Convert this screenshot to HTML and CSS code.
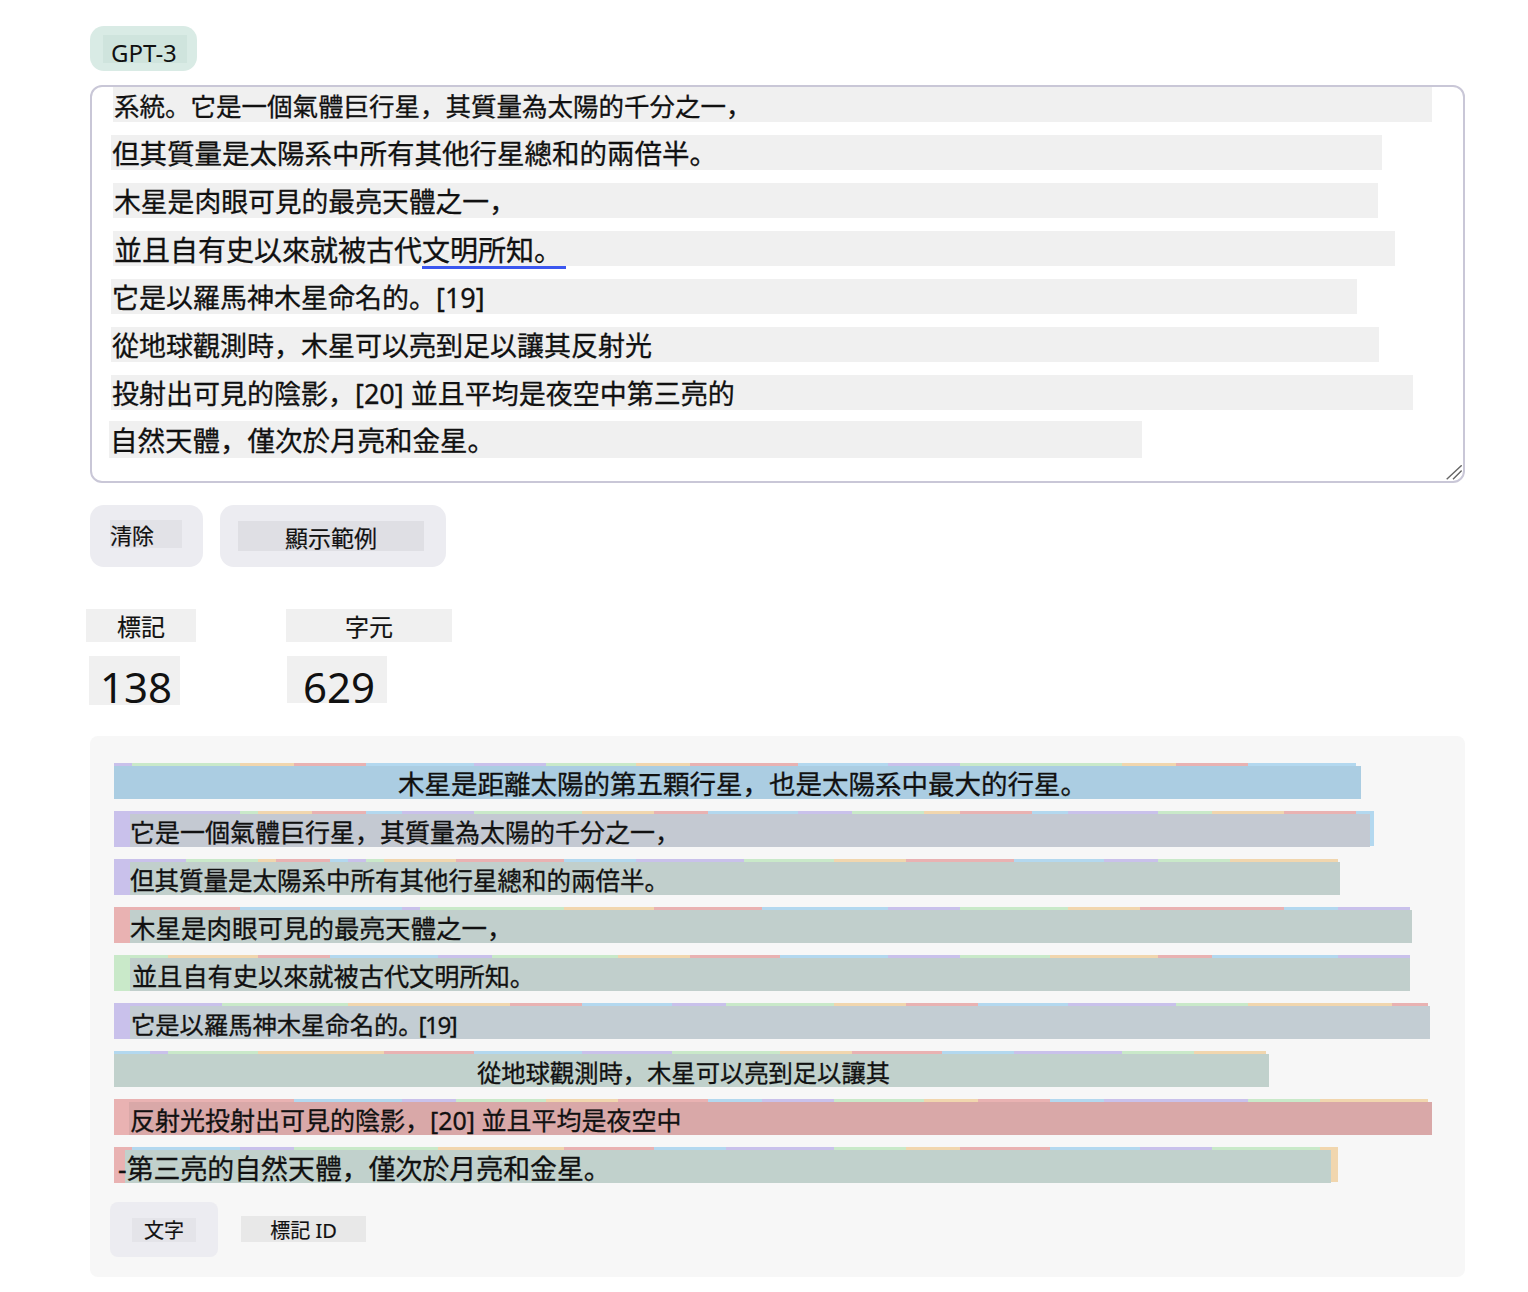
FILE: index.html
```html
<!DOCTYPE html>
<html>
<head>
<meta charset="utf-8">
<title>Tokenizer</title>
<link rel="stylesheet" href="styles.css">
</head>
<body>
<div class="page">
  <div class="tab"><span class="tab-label">GPT-3</span></div>

  <div class="editor">
    <div class="eline fs255" style="margin-left:21px;width:1319px">系統。它是一個氣體巨行星，其質量為太陽的千分之一，</div>
    <div class="eline fs275" style="margin-left:19px;width:1271px">但其質量是太陽系中所有其他行星總和的兩倍半。</div>
    <div class="eline fs268" style="margin-left:21px;width:1265px">木星是肉眼可見的最亮天體之一，</div>
    <div class="eline fs28" style="margin-left:21px;width:1282px">並且自有史以來就被古代文明所知。<span class="spell"></span></div>
    <div class="eline fs27" style="margin-left:19px;width:1246px">它是以羅馬神木星命名的。[19]</div>
    <div class="eline fs27" style="margin-left:19px;width:1268px">從地球觀測時，木星可以亮到足以讓其反射光</div>
    <div class="eline fs27" style="margin-left:19px;width:1302px">投射出可見的陰影，[20] 並且平均是夜空中第三亮的</div>
    <div class="eline eline-last fs275" style="margin-left:17px;width:1033px">自然天體，僅次於月亮和金星。</div>
    <svg class="grip" width="16" height="15" viewBox="0 0 16 15"><path d="M0.7 14.3L15.7 0.3M7 14.3L15.7 5.6" stroke="#666" stroke-width="1.4" fill="none"/></svg>
  </div>

  <div class="actions">
    <button class="btn btn-clear"><span class="btn-in">清除</span></button>
    <button class="btn btn-example"><span class="btn-in">顯示範例</span></button>
  </div>

  <div class="stats">
    <div class="stat stat1">
      <div class="stat-label">標記</div>
      <div class="stat-value">138</div>
    </div>
    <div class="stat stat2">
      <div class="stat-label">字元</div>
      <div class="stat-value">629</div>
    </div>
  </div>

  <div class="tokens">
    <div class="tline">
      <div class="strip" style="width:1242px"><i class="p" style="flex:1"></i><i class="g" style="flex:6"></i><i class="o" style="flex:3"></i><i class="r" style="flex:4"></i><i class="b" style="flex:6"></i><i class="p" style="flex:4"></i><i class="g" style="flex:5"></i><i class="o" style="flex:3"></i><i class="r" style="flex:6"></i><i class="b" style="flex:5"></i><i class="p" style="flex:4"></i><i class="g" style="flex:9"></i><i class="o" style="flex:3"></i><i class="r" style="flex:4"></i><i class="b" style="flex:6"></i></div>
      <div class="trow"><div class="tmain m-blue fs265 center nudge" style="width:1247px">木星是距離太陽的第五顆行星，也是太陽系中最大的行星。</div></div>
    </div>
    <div class="tline">
      <div class="strip" style="width:1260px"><i class="p" style="flex:7"></i><i class="g" style="flex:1"></i><i class="o" style="flex:3"></i><i class="r" style="flex:3"></i><i class="b" style="flex:2"></i><i class="p" style="flex:4"></i><i class="g" style="flex:6"></i><i class="o" style="flex:4"></i><i class="r" style="flex:3"></i><i class="b" style="flex:5"></i><i class="p" style="flex:3"></i><i class="g" style="flex:4"></i><i class="o" style="flex:2"></i><i class="r" style="flex:4"></i><i class="b" style="flex:2"></i><i class="p" style="flex:5"></i><i class="g" style="flex:3"></i><i class="o" style="flex:4"></i><i class="r" style="flex:4"></i><i class="b" style="flex:1"></i></div>
      <div class="trow"><span class="chip p"></span><div class="tmain m-slate fs25" style="width:1240px">它是一個氣體巨行星，其質量為太陽的千分之一，</div><span class="rchip b" style="width:4px"></span></div>
    </div>
    <div class="tline">
      <div class="strip" style="width:1224px"><i class="p" style="flex:4"></i><i class="g" style="flex:4"></i><i class="o" style="flex:1"></i><i class="r" style="flex:3"></i><i class="b" style="flex:1"></i><i class="p" style="flex:1"></i><i class="g" style="flex:1"></i><i class="o" style="flex:4"></i><i class="r" style="flex:6"></i><i class="b" style="flex:4"></i><i class="p" style="flex:6"></i><i class="g" style="flex:5"></i><i class="o" style="flex:4"></i><i class="r" style="flex:6"></i><i class="b" style="flex:5"></i><i class="p" style="flex:3"></i><i class="g" style="flex:4"></i><i class="o" style="flex:6"></i></div>
      <div class="trow"><span class="chip p"></span><div class="tmain m-sage fs245" style="width:1210px">但其質量是太陽系中所有其他行星總和的兩倍半。</div></div>
    </div>
    <div class="tline">
      <div class="strip" style="width:1296px"><i class="r" style="flex:7"></i><i class="b" style="flex:9"></i><i class="p" style="flex:1"></i><i class="g" style="flex:8"></i><i class="o" style="flex:5"></i><i class="r" style="flex:6"></i><i class="b" style="flex:7"></i><i class="p" style="flex:4"></i><i class="g" style="flex:6"></i><i class="o" style="flex:4"></i><i class="r" style="flex:8"></i><i class="b" style="flex:3"></i><i class="p" style="flex:4"></i></div>
      <div class="trow"><span class="chip r"></span><div class="tmain m-sage fs255" style="width:1282px">木星是肉眼可見的最亮天體之一，</div></div>
    </div>
    <div class="tline">
      <div class="strip" style="width:1296px"><i class="g" style="flex:3"></i><i class="o" style="flex:5"></i><i class="r" style="flex:4"></i><i class="b" style="flex:6"></i><i class="p" style="flex:3"></i><i class="g" style="flex:7"></i><i class="o" style="flex:4"></i><i class="r" style="flex:5"></i><i class="b" style="flex:6"></i><i class="p" style="flex:4"></i><i class="g" style="flex:5"></i><i class="o" style="flex:6"></i><i class="r" style="flex:3"></i><i class="b" style="flex:7"></i><i class="p" style="flex:4"></i></div>
      <div class="trow"><span class="chip g"></span><div class="tmain m-sage fs252 pad2" style="width:1280px">並且自有史以來就被古代文明所知。</div></div>
    </div>
    <div class="tline">
      <div class="strip" style="width:1314px"><i class="p" style="flex:6"></i><i class="g" style="flex:7"></i><i class="o" style="flex:9"></i><i class="r" style="flex:4"></i><i class="b" style="flex:5"></i><i class="p" style="flex:3"></i><i class="g" style="flex:6"></i><i class="o" style="flex:4"></i><i class="r" style="flex:4"></i><i class="b" style="flex:5"></i><i class="p" style="flex:6"></i><i class="g" style="flex:4"></i><i class="o" style="flex:8"></i><i class="r" style="flex:2"></i></div>
      <div class="trow"><span class="chip p"></span><div class="tmain m-steel fs243 pad1" style="width:1300px">它是以羅馬神木星命名的<span class="half">。</span><span class="tight">[19]</span></div></div>
    </div>
    <div class="tline">
      <div class="strip" style="width:1152px"><i class="b" style="flex:2"></i><i class="p" style="flex:1"></i><i class="g" style="flex:5"></i><i class="o" style="flex:7"></i><i class="r" style="flex:5"></i><i class="b" style="flex:6"></i><i class="p" style="flex:5"></i><i class="g" style="flex:6"></i><i class="o" style="flex:4"></i><i class="r" style="flex:5"></i><i class="b" style="flex:4"></i><i class="p" style="flex:6"></i><i class="g" style="flex:4"></i><i class="o" style="flex:4"></i></div>
      <div class="trow"><div class="tmain m-mint fs243 center shift" style="width:1155px">從地球觀測時，木星可以亮到足以讓其</div></div>
    </div>
    <div class="tline">
      <div class="strip" style="width:1314px"><i class="r" style="flex:10"></i><i class="b" style="flex:6"></i><i class="p" style="flex:3"></i><i class="g" style="flex:5"></i><i class="o" style="flex:4"></i><i class="r" style="flex:5"></i><i class="b" style="flex:3"></i><i class="p" style="flex:4"></i><i class="g" style="flex:5"></i><i class="o" style="flex:3"></i><i class="r" style="flex:4"></i><i class="b" style="flex:3"></i><i class="p" style="flex:8"></i><i class="g" style="flex:4"></i><i class="o" style="flex:6"></i></div>
      <div class="trow"><span class="chip r chip15"></span><div class="tmain m-rose fs25 pad1" style="width:1303px">反射光投射出可見的陰影，[20] 並且平均是夜空中</div></div>
    </div>
    <div class="tline">
      <div class="strip" style="width:1224px"><i class="r" style="flex:1"></i><i class="b" style="flex:6"></i><i class="p" style="flex:3"></i><i class="g" style="flex:8"></i><i class="o" style="flex:7"></i><i class="r" style="flex:5"></i><i class="b" style="flex:4"></i><i class="p" style="flex:6"></i><i class="g" style="flex:4"></i><i class="o" style="flex:3"></i><i class="r" style="flex:5"></i><i class="b" style="flex:5"></i><i class="p" style="flex:4"></i><i class="g" style="flex:6"></i><i class="o" style="flex:1"></i></div>
      <div class="trow"><span class="chip r chip11"></span><div class="tmain m-mint fs269 pull" style="width:1206px">-第三亮的自然天體，僅次於月亮和金星。</div><span class="rchip o" style="width:7px"></span></div>
    </div>

    <div class="views">
      <button class="view view-text"><span>文字</span></button>
      <button class="view view-ids"><span>標記 ID</span></button>
    </div>
  </div>
</div>
</body>
</html>
```
FILE: styles.css
```css
* { box-sizing: border-box; }

body {
  margin: 0;
  background: #ffffff;
  color: #111111;
  font-family: "Noto Sans", "Noto Sans CJK JP", sans-serif;
}

.page {
  width: 1528px;
  padding: 26px 0 40px 90px;
}

/* model tab */
.tab {
  width: 107px;
  height: 45px;
  border-radius: 14px;
  background: #d9ebe5;
  padding: 9px 0 0 13px;
}
.tab-label {
  display: block;
  width: 84px;
  height: 28px;
  background: #cfe4dd;
  padding: 7px 0 0 8px;
  font-size: 24px;
  line-height: 21px;
}

/* editor */
.editor {
  position: relative;
  margin-top: 14px;
  width: 1375px;
  height: 398px;
  border: 2px solid #c9c7d7;
  border-radius: 12px;
  background: #ffffff;
  overflow: hidden;
}
.eline {
  position: relative;
  height: 35px;
  margin-top: 13px;
  padding: 3px 0 0 1px;
  background: #f0f0f0;
  line-height: 32px;
  white-space: nowrap;
  -webkit-text-stroke: 0.3px #111111;
}
.eline:first-child { margin-top: 0; }
.eline-last { height: 37px; margin-top: 11px; line-height: 34px; }
.spell {
  position: absolute;
  left: 309px;
  top: 35px;
  width: 144px;
  height: 3px;
  background: #3b57f0;
}
.grip {
  position: absolute;
  right: 1px;
  bottom: 1px;
}

/* font sizes */
.fs243 { font-size: 24.3px; }
.fs245 { font-size: 24.5px; }
.fs248 { font-size: 24.8px; }
.fs25 { font-size: 25px; }
.fs252 { font-size: 25.2px; }
.fs255 { font-size: 25.5px; }
.fs265 { font-size: 26.5px; }
.fs268 { font-size: 26.8px; }
.fs269 { font-size: 26.9px; }
.fs27 { font-size: 27px; }
.fs275 { font-size: 27.5px; }
.fs28 { font-size: 28px; }

/* buttons */
.actions {
  display: flex;
  gap: 17px;
  margin-top: 22px;
}
.btn {
  display: flex;
  flex-direction: column;
  align-items: flex-start;
  justify-content: flex-start;
  height: 62px;
  border: 0;
  margin: 0;
  border-radius: 14px;
  background: #ececf1;
  padding: 15px 0 0 0;
  font: inherit;
  color: inherit;
  text-align: left;
  cursor: pointer;
}
.btn-clear { width: 113px; padding-left: 20px; }
.btn-example { width: 226px; padding-left: 18px; }
.btn-in {
  display: block;
  background: #e2e2e7;
  font-size: 22px;
  -webkit-text-stroke: 0.2px #111111;
}
.btn-clear .btn-in {
  width: 72px;
  height: 28px;
  padding-top: 2px;
  line-height: 26px;
}
.btn-example .btn-in {
  width: 186px;
  height: 30px;
  margin-top: 1px;
  padding-top: 4px;
  line-height: 26px;
  text-align: center;
  font-size: 23px;
  background: #dfdfe4;
}

/* stats */
.stats {
  display: flex;
  margin-top: 42px;
  margin-left: -4px;
}
.stat { width: 200px; }
.stat-label {
  height: 33px;
  padding-top: 3px;
  background: #f0f0f0;
  font-size: 24px;
  line-height: 30px;
  text-align: center;
  -webkit-text-stroke: 0.2px #111111;
}
.stat1 .stat-label { width: 110px; }
.stat2 .stat-label { width: 166px; }
.stat-value {
  margin-top: 14px;
  height: 49px;
  background: #f0f0f0;
  font-size: 42px;
  line-height: 61px;
}
.stat1 .stat-value { width: 91px; margin-left: 3px; padding-left: 11px; }
.stat2 .stat-value { width: 100px; margin-left: 1px; padding-left: 16px; height: 47px; }

/* token view */
.tokens {
  margin-top: 31px;
  width: 1375px;
  background: #f7f7f7;
  border-radius: 8px;
  padding: 27px 0 20px 24px;
}
.tline {
  height: 36px;
  margin-bottom: 12px;
}
.strip {
  display: flex;
  height: 3px;
}
.strip i { display: block; height: 3px; }
.trow {
  display: flex;
  height: 33px;
}
.chip { flex: none; width: 16px; height: 33px; }
.chip15 { width: 15px; }
.chip11 { width: 11px; }
.rchip { flex: none; height: 32px; }
.tmain {
  flex: none;
  height: 33px;
  padding-top: 2px;
  line-height: 33px;
  white-space: nowrap;
  -webkit-text-stroke: 0.3px #111111;
}
.half { letter-spacing: -8px; }
.tight { letter-spacing: -1.5px; margin-left: 4px; }
.center { text-align: center; }
.nudge { padding-left: 10px; }
.shift { padding-right: 16px; }
.pad1 { padding-left: 1px; }
.pad2 { padding-left: 2px; }
.pull { text-indent: -7px; }

.p { background: #c9c1eb; }
.g { background: #c9e9c9; }
.o { background: #f1d6ae; }
.r { background: #e9b2b2; }
.b { background: #b3d8ef; }

.m-blue { background: #abcde2; }
.m-slate { background: #c4c9d2; }
.m-sage { background: #c1cfcc; }
.m-steel { background: #c3cdd3; }
.m-mint { background: #c1d1cc; }
.m-rose { background: #d9a8a8; }

/* view toggle */
.views {
  display: flex;
  gap: 1px;
  margin-top: 19px;
  margin-left: -4px;
}
.view {
  display: flex;
  flex-direction: column;
  align-items: flex-start;
  justify-content: flex-start;
  height: 55px;
  margin: 0;
  border: 0;
  border-radius: 8px;
  padding: 16px 0 0 22px;
  background: transparent;
  font: inherit;
  color: inherit;
  text-align: left;
  cursor: pointer;
}
.view span {
  display: block;
  font-size: 20px;
  text-align: center;
  -webkit-text-stroke: 0.2px #111111;
}
.view-text { width: 108px; background: #ececf1; }
.view-text span {
  width: 64px;
  height: 24px;
  padding-top: 2px;
  line-height: 22px;
  background: #e4e4e9;
}
.view-ids { padding-top: 14px; }
.view-ids span {
  width: 125px;
  height: 26px;
  padding-top: 3px;
  line-height: 23px;
  background: #e8e8e8;
}
```
